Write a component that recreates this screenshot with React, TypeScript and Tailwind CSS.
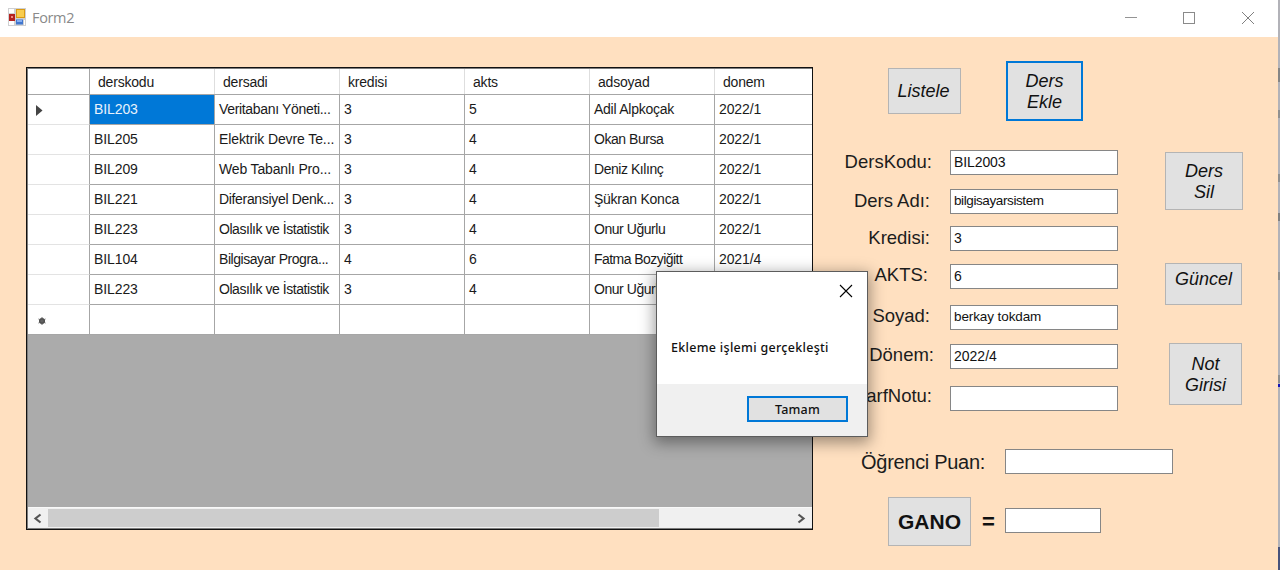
import React from "react";

type Cell = { text: string; track?: string };

const columns = ["derskodu", "dersadi", "kredisi", "akts", "adsoyad", "donem"];

const tight = "tracking-[-0.45px]";
const snug = "tracking-[-0.33px]";
const normal = "tracking-[-0.25px]";
const loose = "tracking-[-0.15px]";

const rows: Cell[][] = [
  [{ text: "BIL203" }, { text: "Veritabanı Yöneti...", track: snug }, { text: "3" }, { text: "5" }, { text: "Adil Alpkoçak", track: normal }, { text: "2022/1" }],
  [{ text: "BIL205" }, { text: "Elektrik Devre Te...", track: "tracking-[-0.1px]" }, { text: "3" }, { text: "4" }, { text: "Okan Bursa", track: tight }, { text: "2022/1" }],
  [{ text: "BIL209" }, { text: "Web Tabanlı Pro...", track: loose }, { text: "3" }, { text: "4" }, { text: "Deniz Kılınç", track: tight }, { text: "2022/1" }],
  [{ text: "BIL221" }, { text: "Diferansiyel Denk...", track: snug }, { text: "3" }, { text: "4" }, { text: "Şükran Konca", track: normal }, { text: "2022/1" }],
  [{ text: "BIL223" }, { text: "Olasılık ve İstatistik", track: tight }, { text: "3" }, { text: "4" }, { text: "Onur Uğurlu", track: tight }, { text: "2022/1" }],
  [{ text: "BIL104" }, { text: "Bilgisayar Progra...", track: tight }, { text: "4" }, { text: "6" }, { text: "Fatma Bozyiğitt", track: "tracking-[-0.55px]" }, { text: "2021/4" }],
  [{ text: "BIL223" }, { text: "Olasılık ve İstatistik", track: tight }, { text: "3" }, { text: "4" }, { text: "Onur Uğurlu", track: tight }, { text: "2022/1" }],
  [{ text: "" }, { text: "" }, { text: "" }, { text: "" }, { text: "" }, { text: "" }],
];

const gridCols = "grid grid-cols-[62px_125px_125px_125px_125px_125px_97px]";

const fields = [
  { label: "DersKodu:", value: "BIL2003", gap: "mt-0", pad: "pr-[18px] pb-[2px]", font: "text-[14px] tracking-[-0.1px]" },
  { label: "Ders Adı:", value: "bilgisayarsistem", gap: "mt-[14px]", pad: "pr-[20px] pb-[2px]", font: "text-[13.5px] tracking-[-0.4px]" },
  { label: "Kredisi:", value: "3", gap: "mt-[12px]", pad: "pr-[20px] pb-[2px]", font: "text-[14px]" },
  { label: "AKTS:", value: "6", gap: "mt-[13px]", pad: "pr-[22px] pb-[4px]", font: "text-[14px]" },
  { label: "Soyad:", value: "berkay tokdam", gap: "mt-[16px]", pad: "pr-[20px] pb-[4px]", font: "text-[13.5px] tracking-[-0.1px]" },
  { label: "Dönem:", value: "2022/4", gap: "mt-[14px]", pad: "pr-[16px] pb-[4px]", font: "text-[14px]" },
  { label: "HarfNotu:", value: "", gap: "mt-[17px]", pad: "pr-[18px] pb-[6px]", font: "text-[14px]" },
];

function FormButton({ className, children }: { className: string; children: React.ReactNode }) {
  return (
    <button className={`flex shrink-0 justify-center bg-[#e1e1e1] text-center text-[18px] leading-[21px] text-[#111] ${className}`}>
      {children}
    </button>
  );
}

function TextBox({ className = "", children }: { className?: string; children?: React.ReactNode }) {
  return (
    <div className={`flex h-[25px] shrink-0 items-center border border-[#868686] bg-white pl-[3px] whitespace-nowrap text-[#111] ${className}`}>
      {children}
    </div>
  );
}

function TitleBar() {
  return (
    <header className="flex h-[37px] shrink-0 items-center bg-white">
      <svg className="mt-[-3px] ml-[8px] shrink-0" width="18" height="18" viewBox="0 0 18 18">
        <rect width="18" height="18" fill="#cfd0d2" />
        <rect x="1" y="1" width="5" height="4" fill="#fff" />
        <rect x="1" y="13" width="5" height="4" fill="#fff" />
        <rect x="1" y="6" width="6" height="7" fill="#b5221f" />
        <rect x="3" y="8" width="2" height="2" fill="#ef8a80" />
        <rect x="8" y="1" width="9" height="9" fill="#d99a14" />
        <rect x="9" y="2" width="7" height="7" fill="#f9cd4e" />
        <rect x="8" y="11.500" width="7" height="5" fill="#3f76cf" />
        <rect x="9" y="12" width="5" height="2" fill="#86aef0" />
        <rect x="16" y="12" width="1" height="5" fill="#fff" />
      </svg>
      <span className="mt-[-2px] ml-[6px] font-['Open_Sans','Noto_Sans',sans-serif] text-[14.5px] tracking-[-0.35px] text-[#8a8a8a]">Form2</span>
      <div className="mt-[-2px] mr-[23px] ml-auto flex items-center gap-[45px]">
        <svg width="14" height="14" viewBox="0 0 14 14" fill="none" stroke="#949494"><path d="M2 6.500H14" /></svg>
        <svg width="14" height="14" viewBox="0 0 14 14" fill="none" stroke="#8a8a8a"><rect x="1.500" y="1.500" width="11" height="11" /></svg>
        <svg width="14" height="14" viewBox="0 0 14 14" fill="none" stroke="#808080"><path d="M1 1L13 13M13 1L1 13" /></svg>
      </div>
    </header>
  );
}

function DataGrid() {
  return (
    <section className="mt-[30px] ml-[26px] flex h-[463px] w-[787px] shrink-0 border border-[#111] text-[14px] text-[#1a1a1a]">
      <div className="flex flex-1 flex-col border-t border-b border-l border-[#7c7c7c] bg-[#ababab]">
        <div className={`${gridCols} h-[26px] bg-white`}>
          <div className="border-r border-b border-[#a6a6a6]" />
          {columns.map((name) => (
            <div key={name} className="flex items-center border-b border-[#a6a6a6] pl-[8px]">
              <span className="flex-1 leading-[18px] tracking-[-0.2px]">{name}</span>
              {name !== "donem" && <span className="h-full w-[1px] bg-[#dedede]" />}
            </div>
          ))}
        </div>
        {rows.map((row, r) => (
          <div key={r} className={`${gridCols} h-[30px] bg-white`}>
            <div className={`flex items-center border-r border-b border-r-[#a6a6a6] pl-[7px] ${r === 7 ? "border-b-[#a6a6a6]" : "border-b-[#e3e3e3]"}`}>
              {r === 0 && (
                <svg className="mt-[2px]" width="8" height="13" viewBox="0 0 8 13"><path d="M1 1L7.500 6.500L1 12Z" fill="#444" /></svg>
              )}
              {r === 7 && (
                <svg className="mt-[3px] ml-[3px]" width="8" height="8" viewBox="0 0 8 8">
                  <circle cx="4" cy="4" r="3" fill="#444" />
                  <path d="M4 0V8M.500 2L7.500 6M.500 6L7.500 2" stroke="#666" />
                </svg>
              )}
            </div>
            {row.map((cell, c) => (
              <div
                key={c}
                className={`flex items-center overflow-hidden border-b border-[#a6a6a6] pl-[4px] leading-[21px] whitespace-nowrap ${c < 5 ? "border-r" : ""} ${r === 0 && c === 0 ? "bg-[#0078d7] text-[#e8f2fc]" : ""} ${cell.track ?? "tracking-[-0.1px]"}`}
              >
                {cell.text}
              </div>
            ))}
          </div>
        ))}
        <div className="mt-auto flex h-[21px] items-center border-t border-[#f8f8f8] bg-[#f0f0f0]">
          <svg className="ml-[5px] shrink-0" width="9" height="11" viewBox="0 0 9 11" fill="none" stroke="#555" strokeWidth="2.200"><path d="M7.500 1.500L2.500 5.500L7.500 9.500" /></svg>
          <div className="ml-[6px] h-[18px] w-[611px] bg-[#cdcdcd]" />
          <svg className="mr-[6px] ml-auto shrink-0" width="9" height="11" viewBox="0 0 9 11" fill="none" stroke="#555" strokeWidth="2.200"><path d="M1.500 1.500L6.500 5.500L1.500 9.500" /></svg>
        </div>
      </div>
    </section>
  );
}

function CourseForm() {
  return (
    <section className="flex flex-1 flex-col">
      <div className="mt-[24px] ml-[75px] flex h-[60px] items-start">
        <FormButton className="mt-[7px] h-[46px] w-[73px] items-center border border-[#b4b4b4] pr-[2px] italic">Listele</FormButton>
        <FormButton className="ml-[45px] h-[60px] w-[77px] items-center border-2 border-[#0078d7] pt-[2px] italic">Ders<br />Ekle</FormButton>
      </div>
      <div className="mt-[29px] flex h-[261px]">
        <div className="flex w-[305px] flex-col">
          {fields.map((f) => (
            <div key={f.label} className={`flex items-center ${f.gap}`}>
              <span className={`flex-1 text-right text-[18.5px] leading-[19px] text-[#1c1c1c] ${f.pad}`}>{f.label}</span>
              <TextBox className={`w-[168px] ${f.font}`}>{f.value}</TextBox>
            </div>
          ))}
        </div>
        <div className="ml-[47px] flex flex-col">
          <FormButton className="mt-[2px] h-[58px] w-[78px] items-center border border-[#b4b4b4] pt-[2px] italic">Ders<br />Sil</FormButton>
          <FormButton className="mt-[53px] h-[42px] w-[77px] items-start border border-[#b4b4b4] pt-[5px] italic">Güncel</FormButton>
          <FormButton className="mt-[38px] ml-[4px] h-[62px] w-[73px] items-center border border-[#b4b4b4] pt-[2px] italic">Not<br />Girisi</FormButton>
        </div>
      </div>
      <div className="mt-[38px] flex items-center">
        <span className="w-[192px] pt-[2px] pr-[20px] text-right text-[20px] leading-[23px] tracking-[-0.3px] whitespace-nowrap text-[#1c1c1c]">Öğrenci Puan:</span>
        <TextBox className="w-[168px]" />
      </div>
      <div className="mt-[23px] ml-[75px] flex items-center">
        <FormButton className="h-[49px] w-[83px] items-center border border-[#b4b4b4] font-bold"><span className="text-[21px]">GANO</span></FormButton>
        <span className="w-[34px] pl-[11px] text-[22px] leading-[25px] font-bold text-[#111]">=</span>
        <TextBox className="mt-[-3px] w-[96px]" />
      </div>
    </section>
  );
}

function MessageDialog() {
  return (
    <div role="dialog" className="absolute top-[271px] left-[656px] flex h-[166px] w-[212px] flex-col border border-[#5c5c5c] bg-white font-['Noto_Sans','Open_Sans',sans-serif] text-[12.5px] font-medium text-[#111] shadow-[0_4px_14px_2px_rgba(0,0,0,0.38)]">
      <div className="flex h-[38px] items-center justify-end pr-[14px]">
        <svg width="14" height="14" viewBox="0 0 14 14" fill="none" stroke="#000" strokeWidth="1.100"><path d="M1 1L13 13M13 1L1 13" /></svg>
      </div>
      <p className="mt-[29px] pl-[14px] leading-[18px] tracking-[0.3px] whitespace-nowrap">Ekleme işlemi gerçekleşti</p>
      <div className="mt-auto flex h-[52px] items-start justify-end bg-[#f0f0f0] pt-[12px] pr-[19px]">
        <button className="h-[26px] w-[101px] border-2 border-[#0078d7] bg-[#e1e1e1] pt-px leading-[22px] tracking-[0.2px]">Tamam</button>
      </div>
    </div>
  );
}

export default function App() {
  return (
    <div className="relative flex h-[570px] w-[1280px] overflow-hidden font-['Liberation_Sans',Arial,sans-serif]">
      <main className="flex w-[1278px] flex-col bg-[#ffe0c0]">
        <TitleBar />
        <div className="flex flex-1">
          <DataGrid />
          <CourseForm />
        </div>
      </main>
      <aside className="flex w-[2px] flex-col bg-[#b2b2b8]">
        <span className="mt-[68px] h-[14px] bg-[#858585]" />
        <span className="mt-[28px] h-[8px] bg-[#909090]" />
        <span className="mt-[56px] h-[8px] bg-[#909090]" />
        <span className="mt-[31px] h-[8px] bg-[#808080]" />
        <span className="mt-[51px] h-[8px] bg-[#909090]" />
        <span className="mt-[95px] h-[8px] bg-[#909090]" />
        <span className="mt-[1px] h-[3px] bg-[#1414b8]" />
        <span className="mt-auto h-[23px] bg-[#46527c]" />
      </aside>
      <MessageDialog />
    </div>
  );
}
